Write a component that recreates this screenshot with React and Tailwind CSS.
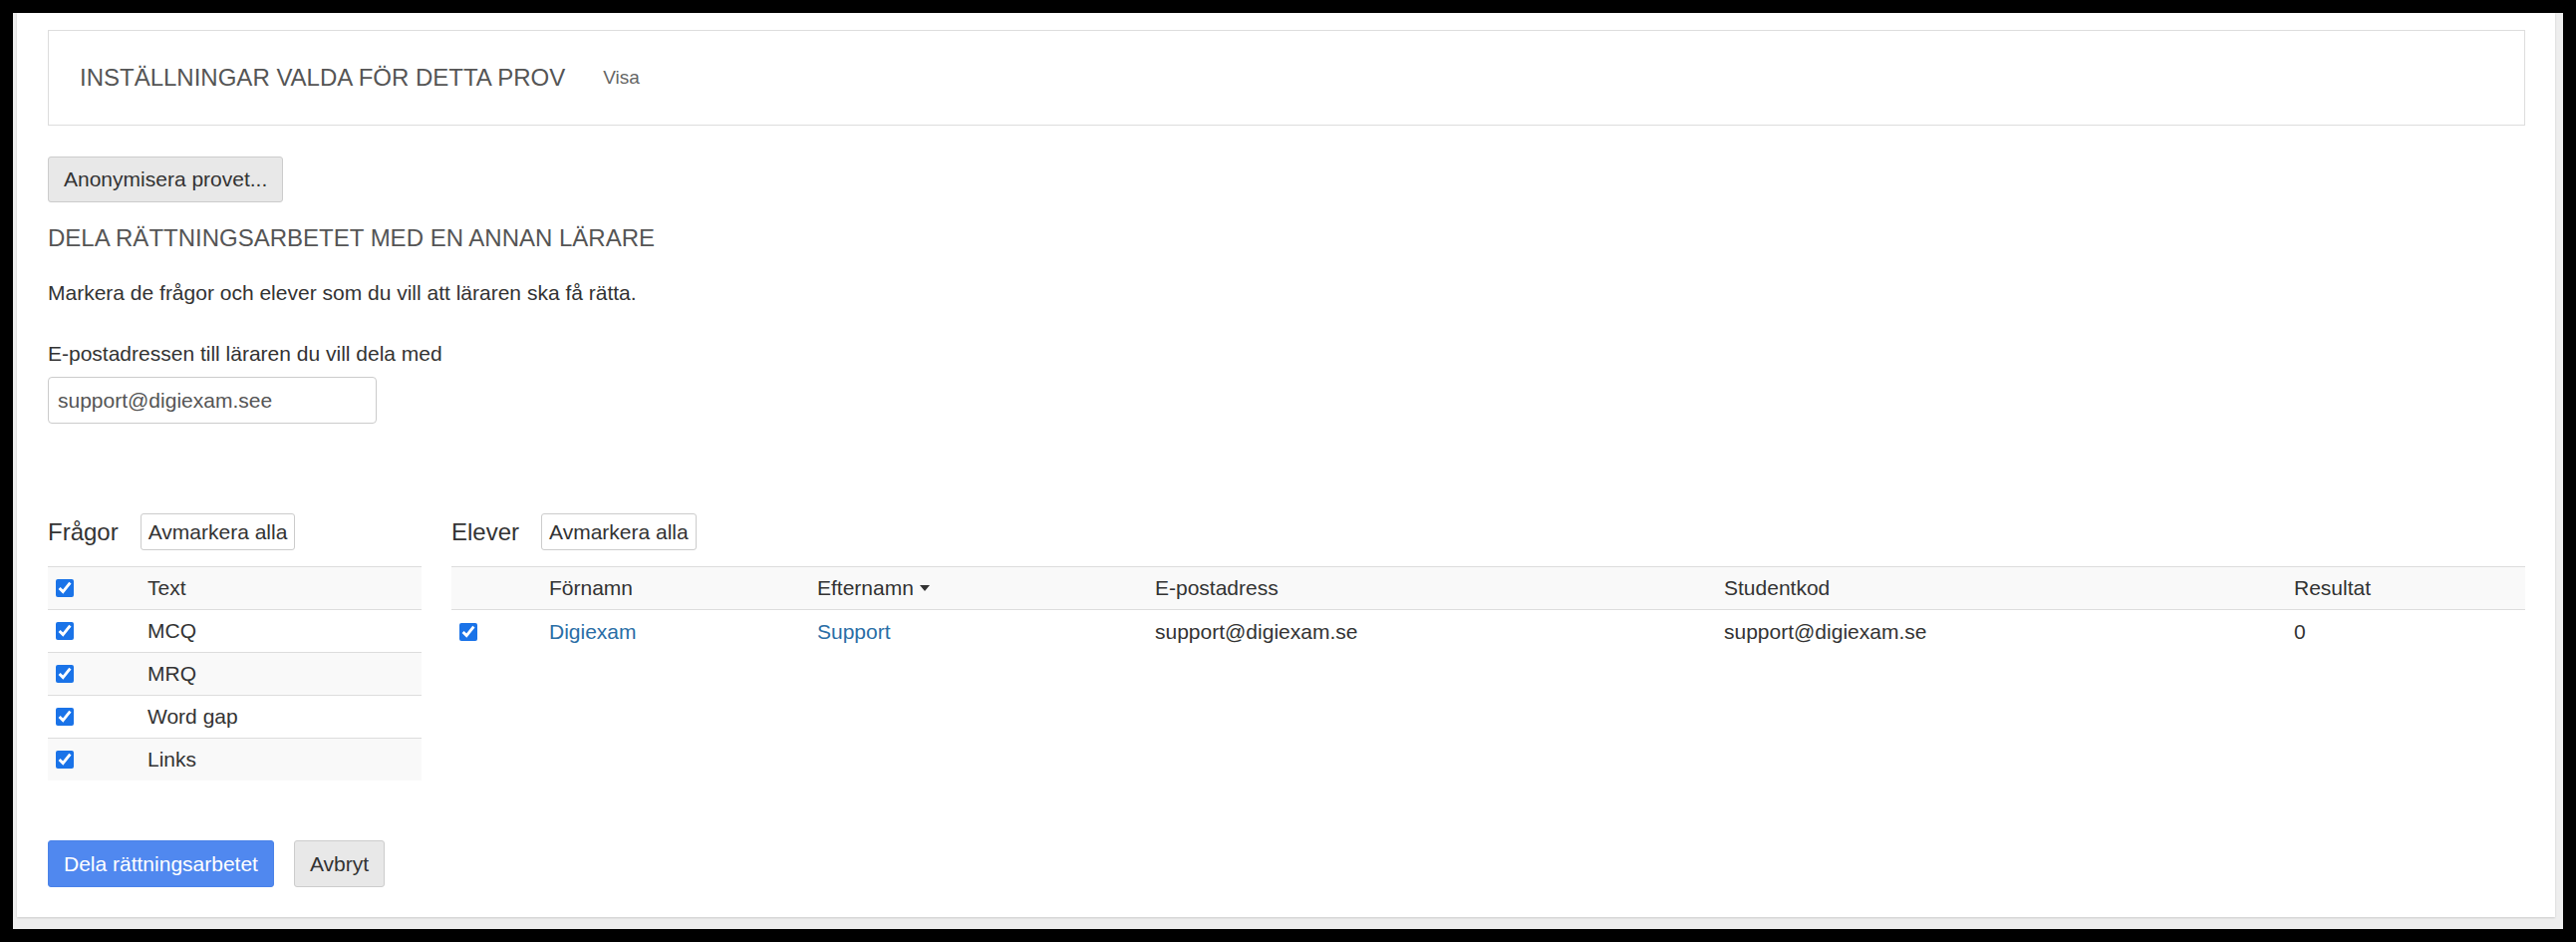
import React from "react";

const Check = () => (
  <input
    type="checkbox"
    checked
    readOnly
    className="w-[18px] h-[18px] m-0 accent-[#1a73e8]"
  />
);

const questions = ["Text", "MCQ", "MRQ", "Word gap", "Links"];

export default function App() {
  return (
    <div className="w-[2585px] h-[945px] bg-black p-[13px] box-border font-['Liberation_Sans',Arial,sans-serif] text-[21px] text-[#333]">
      <div className="h-full bg-[#eeeeee] pl-[4px] pr-[8px] pb-[12px] flex flex-col box-border">
        <div className="flex-1 bg-white shadow-[0_1px_2px_rgba(0,0,0,0.15)] pt-[17px] pl-[31px] pr-[30px] flex flex-col">
          {/* settings box */}
          <div className="h-[96px] border border-[#dddddd] flex items-center pl-[31px] box-border">
            <span className="text-[24px] text-[#555] leading-[30px]">INSTÄLLNINGAR VALDA FÖR DETTA PROV</span>
            <span className="ml-[38px] text-[19px] text-[#666] leading-[30px]">Visa</span>
          </div>

          <div className="mt-[31px]">
            <button className="h-[46px] px-[15px] bg-[#e8e8e8] border border-[#cccccc] rounded-[3px] text-[21px] text-[#333] leading-[30px] font-['Liberation_Sans',Arial,sans-serif]">
              Anonymisera provet...
            </button>
          </div>

          <div className="mt-[21px] text-[24px] leading-[30px] text-[#555]">DELA RÄTTNINGSARBETET MED EN ANNAN LÄRARE</div>

          <div className="mt-[25px] leading-[30px]">Markera de frågor och elever som du vill att läraren ska få rätta.</div>

          <div className="mt-[31px] leading-[30px]">E-postadressen till läraren du vill dela med</div>

          <div className="mt-[8px] w-[330px] h-[47px] border border-[#cccccc] rounded-[4px] flex items-center pl-[9px] box-border text-[#555]">
            support@digiexam.see
          </div>

          {/* tables */}
          <div className="mt-[90px] flex gap-[30px] items-start">
            {/* questions */}
            <div className="w-[375px] flex flex-col">
              <div className="h-[37px] flex items-center gap-[22px]">
                <span className="text-[24px] leading-[37px]">Frågor</span>
                <button className="h-[37px] px-[7px] bg-white border border-[#cccccc] rounded-[3px] text-[21px] text-[#333] font-['Liberation_Sans',Arial,sans-serif]">
                  Avmarkera alla
                </button>
              </div>
              <div className="mt-[16px] flex flex-col">
                {questions.map((q, i) => (
                  <div
                    key={q}
                    className={
                      "h-[43px] border-t border-[#dddddd] grid grid-cols-[92px_1fr] items-center box-border " +
                      (i % 2 === 0 ? "bg-[#f9f9f9]" : "bg-white")
                    }
                  >
                    <div className="pl-[8px] flex items-center">
                      <Check />
                    </div>
                    <div className="pl-[8px]">{q}</div>
                  </div>
                ))}
              </div>
            </div>

            {/* students */}
            <div className="flex-1 flex flex-col">
              <div className="h-[37px] flex items-center gap-[22px]">
                <span className="text-[24px] leading-[37px]">Elever</span>
                <button className="h-[37px] px-[7px] bg-white border border-[#cccccc] rounded-[3px] text-[21px] text-[#333] font-['Liberation_Sans',Arial,sans-serif]">
                  Avmarkera alla
                </button>
              </div>
              <div className="mt-[16px] flex flex-col">
                <div className="h-[44px] border-t border-b border-[#dddddd] bg-[#f9f9f9] grid grid-cols-[90px_269px_339px_571px_572px_1fr] items-center box-border">
                  <div></div>
                  <div className="pl-[8px]">Förnamn</div>
                  <div className="pl-[8px] flex items-center">
                    Efternamn
                    <span className="ml-[6px] inline-block w-0 h-0 border-l-[5px] border-r-[5px] border-t-[6px] border-l-transparent border-r-transparent border-t-[#333]"></span>
                  </div>
                  <div className="pl-[8px]">E-postadress</div>
                  <div className="pl-[8px]">Studentkod</div>
                  <div className="pl-[8px]">Resultat</div>
                </div>
                <div className="h-[43px] grid grid-cols-[90px_269px_339px_571px_572px_1fr] items-center">
                  <div className="pl-[8px] flex items-center">
                    <Check />
                  </div>
                  <div className="pl-[8px] text-[#2a6ea6]">Digiexam</div>
                  <div className="pl-[8px] text-[#2a6ea6]">Support</div>
                  <div className="pl-[8px]">support@digiexam.se</div>
                  <div className="pl-[8px]">support@digiexam.se</div>
                  <div className="pl-[8px]">0</div>
                </div>
              </div>
            </div>
          </div>

          {/* bottom buttons */}
          <div className="mt-[60px] flex gap-[20px]">
            <button className="h-[47px] px-[15px] bg-[#5088ef] border border-[#4a82e8] rounded-[3px] text-white text-[21px] font-['Liberation_Sans',Arial,sans-serif]">
              Dela rättningsarbetet
            </button>
            <button className="h-[47px] px-[15px] bg-[#e8e8e8] border border-[#cccccc] rounded-[3px] text-[#333] text-[21px] font-['Liberation_Sans',Arial,sans-serif]">
              Avbryt
            </button>
          </div>
        </div>
      </div>
    </div>
  );
}
